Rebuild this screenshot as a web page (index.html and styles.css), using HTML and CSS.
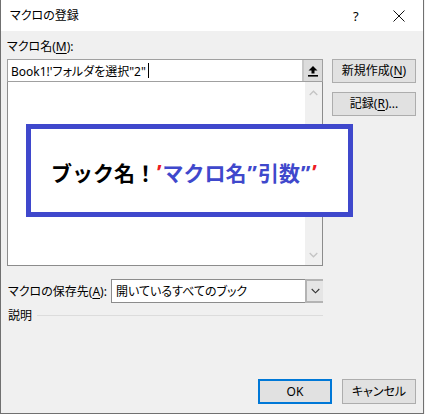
FILE: index.html
```html
<!DOCTYPE html>
<html lang="ja">
<head>
<meta charset="utf-8">
<title>マクロの登録</title>
<link rel="stylesheet" href="styles.css">
</head>
<body>
<div class="window">
  <div class="titlebar">
    <span class="title">マクロの登録</span>
    <span class="help">?</span>
    <span class="close"><svg width="12" height="12" viewBox="0 0 12 12"><path d="M0.5 0.5L11.5 11.5M11.5 0.5L0.5 11.5" stroke="#111" stroke-width="1" fill="none"/></svg></span>
  </div>
  <div class="body">
    <div class="main">
      <div class="left">
        <div class="label">マクロ名(<u>M</u>):</div>
        <div class="namebox">
          <span class="nametext">Book1!'フォルダを選択"2"<span class="caret"></span></span>
          <span class="collapse"><svg width="12" height="12" viewBox="0 0 12 12"><path d="M6 1L1.5 5.5H4.5V8.5H7.5V5.5H10.5Z" fill="#000"/><rect x="1" y="10" width="10" height="1.6" fill="#000"/></svg></span>
        </div>
        <div class="list">
          <div class="scroll">
            <svg width="9" height="6" viewBox="0 0 9 6"><path d="M0.7 5L4.5 1.2L8.3 5" stroke="#c4c4c4" stroke-width="1.3" fill="none"/></svg>
            <svg width="9" height="6" viewBox="0 0 9 6"><path d="M0.7 1L4.5 4.8L8.3 1" stroke="#c4c4c4" stroke-width="1.3" fill="none"/></svg>
          </div>
        </div>
      </div>
      <div class="right">
        <button class="btn">新規作成(<u>N</u>)</button>
        <button class="btn second">記録(<u>R</u>)...</button>
      </div>
    </div>
    <div class="saverow">
      <span class="savelabel">マクロの保存先(<u>A</u>):</span>
      <div class="select">
        <span class="selecttext">開いているすべてのブック</span>
        <span class="drop"><svg width="9" height="6" viewBox="0 0 9 6"><path d="M0.7 1L4.5 4.8L8.3 1" stroke="#333" stroke-width="1.1" fill="none"/></svg></span>
      </div>
    </div>
    <div class="desc"><span>説明</span><span class="rule"></span></div>
    <div class="footer">
      <button class="btn ok">OK</button>
      <button class="btn">キャンセル</button>
    </div>
  </div>
  <div class="callout">ブック名！<span class="red">’</span><span class="blue">マクロ名<span class="q">”</span>引数<span class="q">”</span></span><span class="red">’</span></div>
</div>
</body>
</html>
```

FILE: styles.css
```css
* { box-sizing: border-box; }
html, body { margin: 0; padding: 0; }
body {
  background: #f3f3f3;
  font-family: "Noto Sans", "Noto Sans CJK JP", sans-serif;
  font-size: 12px;
  color: #000;
  font-feature-settings: "palt";
}
u { text-decoration: underline; text-underline-offset: 2px; }
.window {
  position: relative;
  width: 424px;
  height: 414px;
  border: 1px solid #707070;
  border-top: none;
  background: #f0f0f0;
  display: flex;
  flex-direction: column;
}
.titlebar {
  height: 31px;
  background: #fff;
  display: flex;
  align-items: center;
  padding-left: 9px;
}
.title { flex: 1; line-height: 16px; }
.help { width: 40px; font-size: 13px; line-height: 16px; }
.close { width: 30px; display: flex; align-items: center; padding-left: 0; }
.body {
  flex: 1;
  display: flex;
  flex-direction: column;
  padding: 8px 7px 9px 6px;
}
.main { display: flex; gap: 9px; }
.left { width: 316px; display: flex; flex-direction: column; }
.label { line-height: 16px; height: 16px; margin-bottom: 4px; }
.namebox {
  height: 23px;
  border: 1px solid #a0a0a0;
  background: #fff;
  display: flex;
  align-items: stretch;
}
.nametext {
  flex: 1;
  display: flex;
  align-items: center;
  padding-left: 3px;
  font-size: 12px;
}
.caret { display: inline-block; width: 1px; height: 15px; background: #000; margin-left: 2px; }
.collapse {
  width: 20px;
  background: #dcdcdc;
  border-left: 2px solid #c8c8c8;
  display: flex;
  align-items: center;
  justify-content: center;
}
.list {
  height: 184px;
  border: 1px solid #8c8c8c;
  border-top: none;
  background: #fff;
  display: flex;
  justify-content: flex-end;
}
.scroll {
  width: 17px;
  background: #f0f0f0;
  display: flex;
  flex-direction: column;
  justify-content: space-between;
  align-items: center;
  padding: 8px 0 7px;
}
.right { width: 84px; display: flex; flex-direction: column; padding-top: 20px; }
.btn {
  font: inherit;
  color: #000;
  background: #e1e1e1;
  border: 1px solid #adadad;
  height: 24px;
  padding: 0;
  margin: 0;
  text-align: center;
  line-height: 20px;
}
.right .btn { width: 84px; }
.right .second { margin-top: 9px; }
.saverow {
  margin-top: 13px;
  display: flex;
  align-items: center;
  height: 24px;
}
.savelabel { width: 104px; padding-left: 1px; }
.select {
  width: 212px;
  height: 24px;
  border: 1px solid #8c8c8c;
  background: #fff;
  display: flex;
}
.selecttext { flex: 1; display: flex; align-items: center; padding-left: 4px; }
.drop {
  width: 18px;
  background: #e5e5e5;
  border: 2px solid #b4b4b4;
  border-right: none;
  display: flex;
  align-items: center;
  justify-content: center;
  margin: -1px -1px -1px 0;
  height: 24px;
}
.desc {
  display: flex;
  align-items: center;
  height: 16px;
  margin-top: 4px;
  width: 316px;
}
.desc span:first-child { padding-left: 1px; }
.rule { flex: 1; height: 1px; background: #dcdcdc; margin-left: 5px; }
.footer {
  margin-top: auto;
  display: flex;
  justify-content: flex-end;
  gap: 10px;
}
.footer .btn { width: 74px; height: 25px; line-height: 21px; }
.footer .ok { border: 2px solid #0078d7; line-height: 19px; }
.callout {
  position: absolute;
  left: 25px;
  top: 124px;
  width: 327px;
  height: 93px;
  border: 5px solid #3f48cc;
  background: #fff;
  display: flex;
  align-items: center;
  padding-left: 20px;
  padding-top: 2px;
  font-size: 21px;
  font-weight: bold;
  font-feature-settings: normal;
  color: #000;
}
.q { margin: 0 1px; }
.red { color: #ed1c24; margin: 0 1px; }
.blue { color: #3f48cc; }
```
